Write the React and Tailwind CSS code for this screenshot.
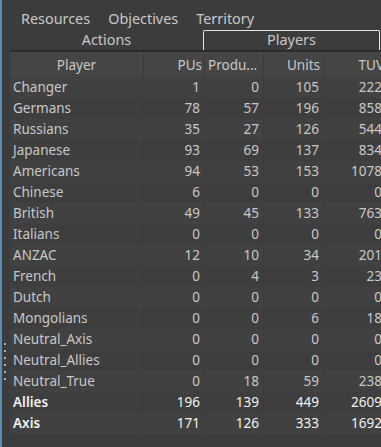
import React from 'react';

const rows = [
    ['Changer', 1, 0, 105, 222],
    ['Germans', 78, 57, 196, 858],
    ['Russians', 35, 27, 126, 544],
    ['Japanese', 93, 69, 137, 834],
    ['Americans', 94, 53, 153, 1078],
    ['Chinese', 6, 0, 0, 0],
    ['British', 49, 45, 133, 763],
    ['Italians', 0, 0, 0, 0],
    ['ANZAC', 12, 10, 34, 201],
    ['French', 0, 4, 3, 23],
    ['Dutch', 0, 0, 0, 0],
    ['Mongolians', 0, 0, 6, 18],
    ['Neutral_Axis', 0, 0, 0, 0],
    ['Neutral_Allies', 0, 0, 0, 0],
    ['Neutral_True', 0, 18, 59, 238],
    ['Allies', 196, 139, 449, 2609, true],
    ['Axis', 171, 126, 333, 1692, true],
];

const cols = 'grid grid-cols-[134px_61px_59px_60px_64px]';

const App = () => {
    return (
        <div
            className="relative flex w-[381px] h-[447px] bg-[#3c3c3c] overflow-hidden text-[13.5px] text-[#c8c8c8]"
            style={{ fontFamily: '"Noto Sans", "DejaVu Sans", sans-serif' }}
        >
            {/* window edge */}
            <div className="w-[2px] h-full bg-[#5a8cb4] shrink-0"></div>

            {/* splitter handle */}
            <div className="absolute left-[4px] top-[343px] flex flex-col gap-[5px]">
                {[0, 1, 2, 3, 4, 5].map(i => (
                    <div key={i} className="w-[2px] h-[2px] rounded-full bg-[#d8d8d8]"></div>
                ))}
            </div>

            <div className="flex-1 pl-[8px] flex flex-col min-w-0">
                {/* top tabs */}
                <div className="flex h-[22px] mt-[8px] items-center pl-[11px] gap-[18px] text-[14.4px] leading-none">
                    <span>Resources</span>
                    <span>Objectives</span>
                    <span>Territory</span>
                </div>

                {/* second tab row */}
                <div className="flex h-[20px] text-[14.4px] leading-none">
                    <div className="w-[193px] flex items-center justify-center">Actions</div>
                    <div className="w-[177px] flex items-center justify-center border-t border-x border-[#e6e6e6] rounded-t-[2px] bg-[#3c3c3c]">
                        Players
                    </div>
                </div>
                <div className="h-[2px] bg-[#2c2c2c]"></div>
                <div className="h-[2px] bg-[#474747]"></div>

                {/* table */}
                <div className="w-[371px] overflow-hidden">
                    <div className={`${cols} w-[378px] h-[23px] bg-[#454545] items-center`}>
                        <div className="border-r border-[#3b3b3b] h-full flex items-center justify-center">Player</div>
                        <div className="pr-[2px] border-r border-[#3b3b3b] h-full flex items-center justify-end">PUs</div>
                        <div className="pl-[3px] border-r border-[#3b3b3b] h-full flex items-center">Produ...</div>
                        <div className="pr-[3px] border-r border-[#3b3b3b] h-full flex items-center justify-end">Units</div>
                        <div className="pr-[4px] h-full flex items-center justify-end">TUV</div>
                    </div>

                    {rows.map((r, idx) => (
                        <div
                            key={idx}
                            className={`${cols} w-[378px] h-[21px] items-center ${idx % 2 === 0 ? 'bg-[#414141]' : 'bg-[#3e3e3e]'} ${r[5] ? 'text-[#f2f2f2]' : ''}`}
                        >
                            <div className={`pl-[3px] h-full flex items-center border-r border-[#3c3c3c] ${r[5] ? 'font-semibold' : ''}`}>{r[0]}</div>
                            <div className="pr-[4px] h-full flex items-center justify-end border-r border-[#3c3c3c]">{r[1]}</div>
                            <div className="pr-[4px] h-full flex items-center justify-end border-r border-[#3c3c3c]">{r[2]}</div>
                            <div className="pr-[4px] h-full flex items-center justify-end border-r border-[#3c3c3c]">{r[3]}</div>
                            <div className="pr-[6px] h-full flex items-center justify-end">{r[4]}</div>
                        </div>
                    ))}
                </div>
            </div>
        </div>
    );
};

export default App;
